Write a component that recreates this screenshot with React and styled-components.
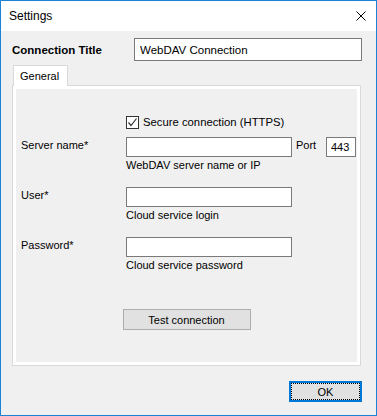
import React from 'react';
import styled, {createGlobalStyle} from 'styled-components';

const GlobalStyle = createGlobalStyle`
    html, body{
        margin:0;
        padding:0;
        background:#f0f0f0;
    }
    body{
        font-family: "Liberation Sans", Arial, sans-serif;
        font-size:11px;
        color:#000;
    }
    *{
        box-sizing:border-box;
    }
`

const fields = [
    {label: 'User*', hint: 'Cloud service login'},
    {label: 'Password*', hint: 'Cloud service password'},
];

const App = () => {
    return(
        <>
        <GlobalStyle/>
        <Window>
            <TitleBar>
                <Title>Settings</Title>
                <CloseButton aria-label="Close">
                    <svg width="10" height="10" viewBox="0 0 10 10">
                        <path d="M0.5 0.5 L9.5 9.5 M9.5 0.5 L0.5 9.5" stroke="#000" strokeWidth="1" fill="none"/>
                    </svg>
                </CloseButton>
            </TitleBar>
            <Body>
                <HeaderRow>
                    <HeaderLabel>Connection Title</HeaderLabel>
                    <TitleInput defaultValue="WebDAV Connection"/>
                </HeaderRow>
                <TabStrip>
                    <Tab>General</Tab>
                </TabStrip>
                <Panel>
                    <CheckRow>
                        <CheckBox>
                            <svg width="11" height="11" viewBox="0 0 11 11">
                                <path d="M1.5 5.5 L4 8.5 L9.5 1.5" stroke="#333" strokeWidth="1.2" fill="none"/>
                            </svg>
                        </CheckBox>
                        <span>Secure connection (HTTPS)</span>
                    </CheckRow>
                    <FormRow $gap={7}>
                        <Label>Server name*</Label>
                        <Field>
                            <InputLine>
                                <TextBox/>
                                <PortLabel>Port</PortLabel>
                                <PortBox defaultValue="443"/>
                            </InputLine>
                            <Hint>WebDAV server name or IP</Hint>
                        </Field>
                    </FormRow>
                    {fields.map(f => (
                        <FormRow key={f.label} $gap={14}>
                            <Label>{f.label}</Label>
                            <Field>
                                <TextBox type={f.label === 'Password*' ? 'password' : 'text'}/>
                                <Hint>{f.hint}</Hint>
                            </Field>
                        </FormRow>
                    ))}
                    <ButtonRow>
                        <Button>Test connection</Button>
                    </ButtonRow>
                </Panel>
                <Footer>
                    <OkButton>OK</OkButton>
                </Footer>
            </Body>
        </Window>
        </>
    )
};

const Window = styled.div`
    width:377px;
    height:416px;
    border:1px solid #1883d7;
    display:flex;
    flex-direction:column;
    background:#f0f0f0;
`
const TitleBar = styled.div`
    height:30px;
    background:#fff;
    display:flex;
    align-items:center;
    justify-content:space-between;
    padding-left:8px;
`
const Title = styled.div`
    font-size:12px;
`
const CloseButton = styled.div`
    width:30px;
    height:30px;
    display:flex;
    align-items:center;
    justify-content:center;
    svg{
        display:block;
    }
`
const Body = styled.div`
    flex:1;
    display:flex;
    flex-direction:column;
    padding:7px 14px 0 11px;
`
const HeaderRow = styled.div`
    display:flex;
    align-items:center;
    height:23px;
`
const HeaderLabel = styled.div`
    width:122px;
    font-weight:bold;
    font-size:11.5px;
`
const TitleInput = styled.input`
    width:228px;
    height:23px;
    border:1px solid #7a7a7a;
    background:#fff;
    padding:0 5px;
    font-family:inherit;
    font-size:11.5px;
    color:#000;
    outline:none;
`
const TabStrip = styled.div`
    display:flex;
    margin-top:4px;
    padding-left:1px;
    position:relative;
    z-index:1;
    margin-bottom:-1px;
`
const Tab = styled.div`
    width:55px;
    height:21px;
    background:#fff;
    border:1px solid #d9d9d9;
    border-bottom:none;
    padding-left:6px;
    line-height:20px;
`
const Panel = styled.div`
    width:349px;
    height:281px;
    border:1px solid #d9d9d9;
    box-shadow:inset 0 0 0 3px #fff;
    background:#f0f0f0;
    padding:28px 0 0 8px;
    display:flex;
    flex-direction:column;
`
const CheckRow = styled.div`
    display:flex;
    align-items:center;
    height:16px;
    margin-left:105px;
    span{
        margin-left:4px;
        font-size:11.3px;
    }
`
const CheckBox = styled.div`
    width:13px;
    height:13px;
    border:1px solid #333;
    background:#fff;
    display:flex;
    align-items:center;
    justify-content:center;
    svg{
        display:block;
    }
`
const FormRow = styled.div`
    display:flex;
    margin-top:${p => p.$gap}px;
`
const Label = styled.div`
    width:105px;
    line-height:16px;
`
const Field = styled.div`
    display:flex;
    flex-direction:column;
`
const InputLine = styled.div`
    display:flex;
    align-items:flex-start;
`
const TextBox = styled.input`
    width:166px;
    height:20px;
    border:1px solid #7a7a7a;
    background:#fff;
    padding:0 4px;
    font-family:inherit;
    font-size:11px;
    outline:none;
`
const PortLabel = styled.div`
    margin-left:4px;
    width:30px;
    line-height:16px;
`
const PortBox = styled.input`
    width:30px;
    height:20px;
    border:1px solid #7a7a7a;
    background:#fff;
    padding:0 4px;
    font-family:inherit;
    font-size:11px;
    color:#000;
    outline:none;
`
const Hint = styled.div`
    line-height:16px;
`
const ButtonRow = styled.div`
    display:flex;
    justify-content:center;
    margin-top:36px;
    margin-left:-8px;
`
const Button = styled.div`
    width:128px;
    height:21px;
    background:#e1e1e1;
    border:1px solid #adadad;
    display:flex;
    align-items:center;
    justify-content:center;
`
const Footer = styled.div`
    display:flex;
    justify-content:flex-end;
    margin-top:15px;
`
const OkButton = styled.div`
    width:73px;
    height:21px;
    background:#e1e1e1;
    border:1px solid #0078d7;
    box-shadow:inset 0 0 0 1px #0078d7;
    outline:1px dotted #000;
    outline-offset:-3px;
    display:flex;
    align-items:center;
    justify-content:center;
`

export default App;
